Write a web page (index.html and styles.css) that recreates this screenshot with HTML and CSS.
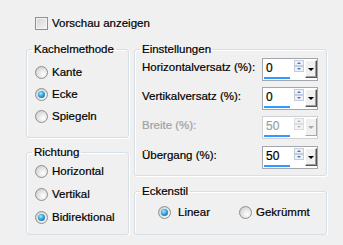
FILE: index.html
```html
<!DOCTYPE html>
<html lang="de">
<head>
    <meta charset="UTF-8">
    <title>Kacheln</title>
    <link rel="stylesheet" href="styles.css">
</head>
<body>
    <div class="dialog">
        <label class="check-row"><span class="checkbox"></span>Vorschau anzeigen</label>

        <div class="groups">
            <div class="col">
                <fieldset class="group group-method">
                    <legend>Kachelmethode</legend>
                    <div class="options">
                        <label class="option"><span class="radio"></span>Kante</label>
                        <label class="option"><span class="radio checked"></span>Ecke</label>
                        <label class="option"><span class="radio"></span>Spiegeln</label>
                    </div>
                </fieldset>
                <fieldset class="group group-dir">
                    <legend>Richtung</legend>
                    <div class="options options-dir">
                        <label class="option"><span class="radio"></span>Horizontal</label>
                        <label class="option"><span class="radio"></span>Vertikal</label>
                        <label class="option"><span class="radio checked"></span>Bidirektional</label>
                    </div>
                </fieldset>
            </div>

            <div class="col">
                <fieldset class="group group-settings">
                    <legend>Einstellungen</legend>
                    <div class="fields">
                        <div class="field">
                            <span class="field-label">Horizontalversatz (%):</span>
                            <div class="spin">
                                <div class="spin-value"><span>0</span><span class="spin-bar"></span></div>
                                <div class="spin-arrows"><span class="arr up"></span><span class="arr down"></span></div>
                                <div class="spin-drop"></div>
                            </div>
                        </div>
                        <div class="field">
                            <span class="field-label">Vertikalversatz (%):</span>
                            <div class="spin">
                                <div class="spin-value"><span>0</span><span class="spin-bar"></span></div>
                                <div class="spin-arrows"><span class="arr up"></span><span class="arr down"></span></div>
                                <div class="spin-drop"></div>
                            </div>
                        </div>
                        <div class="field disabled">
                            <span class="field-label">Breite (%):</span>
                            <div class="spin">
                                <div class="spin-value"><span>50</span><span class="spin-bar"></span></div>
                                <div class="spin-arrows"><span class="arr up"></span><span class="arr down"></span></div>
                                <div class="spin-drop"></div>
                            </div>
                        </div>
                        <div class="field">
                            <span class="field-label">Übergang (%):</span>
                            <div class="spin">
                                <div class="spin-value"><span>50</span><span class="spin-bar"></span></div>
                                <div class="spin-arrows"><span class="arr up"></span><span class="arr down"></span></div>
                                <div class="spin-drop"></div>
                            </div>
                        </div>
                    </div>
                </fieldset>
                <fieldset class="group group-corner">
                    <legend>Eckenstil</legend>
                    <div class="options-row">
                        <label class="option option-linear"><span class="radio checked"></span>Linear</label>
                        <label class="option"><span class="radio"></span>Gekrümmt</label>
                    </div>
                </fieldset>
            </div>
        </div>
    </div>
</body>
</html>
```

FILE: styles.css
```css
body {
    margin: 0;
    background-color: #f0f0f0;
    font-family: 'Liberation Sans', Arial, sans-serif;
    font-size: 11.5px;
    color: #000;
    -webkit-text-stroke: 0.2px currentColor; /* heavier, like ClearType */
}
.dialog {
    padding: 17px 0 0 26px;
    width: 301px;
}

/* checkbox row on top */
.check-row {
    display: flex;
    align-items: center;
    gap: 4px;
    height: 13px;
    margin-left: 9px;
    line-height: 13px;
}
.checkbox {
    width: 13px;
    height: 13px;
    box-sizing: border-box;
    border: 1px solid #8e8f8f;
    background: linear-gradient(135deg, #d4d4d4, #f4f4f4);
    box-shadow: inset 0 0 0 1px #f4f4f4;
}

.groups {
    display: grid;
    grid-template-columns: 103px 193px;
    gap: 5px;
    margin-top: 12px;
}
.col {
    display: flex;
    flex-direction: column;
}

/* group boxes */
.group {
    margin: 0;
    padding: 0;
    min-width: 0;
    box-sizing: border-box;
    border: 1px solid #d5dfe5;
    border-radius: 3px;
    box-shadow: inset 1px 1px 0 #fff, 1px 1px 0 #fff;
}
.group legend {
    margin-left: 5px;
    padding: 0 2px;
    line-height: 14px;
}
.group-method { height: 96px; }
.group-dir { height: 90px; margin-top: 7px; }
.group-settings { height: 134px; }
.group-corner { height: 51px; margin-top: 8px; }

/* radio options */
.options {
    display: flex;
    flex-direction: column;
    gap: 7px;
    padding: 9px 0 0 8px;
}
.options-dir {
    gap: 8px;
    padding-top: 5px;
}
.options-row {
    display: flex;
    padding: 7px 0 0 23px;
}
.option {
    display: flex;
    align-items: center;
    gap: 4px;
    height: 15px;
    line-height: 15px;
}
.option-linear {
    width: 81px;
}
.option-linear .radio {
    margin-right: 3px;
}
.radio {
    position: relative;
    flex: none;
    width: 13px;
    height: 13px;
    box-sizing: border-box;
    border-radius: 50%;
    border: 1px solid #8f8f8f;
    background: radial-gradient(circle at 65% 65%, #ffffff 0%, #e6e6e6 45%, #c4c4c4 100%);
}
.radio.checked::after {
    content: "";
    position: absolute;
    left: 2px;
    top: 2px;
    width: 7px;
    height: 7px;
    border-radius: 50%;
    background: radial-gradient(circle at 40% 35%, #a8ecff 0%, #2fa4dc 45%, #0d5b8e 100%);
}

/* settings fields */
.fields {
    display: flex;
    flex-direction: column;
    gap: 6px;
    padding: 2px 8px 0 7px;
}
.field {
    display: flex;
    justify-content: space-between;
    align-items: flex-start;
    height: 23px;
}
.field-label {
    padding-top: 2px;
    line-height: 14px;
}
.field:nth-child(4) {
    margin-top: 1px;
}
.spin {
    display: flex;
    align-items: flex-start;
    width: 56px;
    height: 23px;
    box-sizing: border-box;
    border: 1px solid #a3a6ad;
    background-color: #fff;
}
.spin-value {
    display: flex;
    flex-direction: column;
    width: 31px;
    padding: 2px 0 0 3px;
    box-sizing: border-box;
    line-height: 14px;
    font-size: 12px;
}
.spin-bar {
    width: 26px;
    height: 2px;
    margin: 2px 0 0 -2px;
    background-color: #3399ff;
}
.spin-arrows {
    display: flex;
    flex-direction: column;
    width: 10px;
    margin-top: 1px;
}
.arr {
    position: relative;
    height: 6px;
    box-sizing: border-box;
    border: 1px solid #c5cdd8;
    background-color: #eef2f8;
}
.arr::after {
    content: "";
    position: absolute;
    left: 2px;
    border-left: 2px solid transparent;
    border-right: 2px solid transparent;
}
.arr.up::after {
    top: 1px;
    border-bottom: 2px solid #4a78c8;
}
.arr.down::after {
    top: 1px;
    border-top: 2px solid #4a78c8;
}
.spin-drop {
    position: relative;
    width: 12px;
    height: 18px;
    margin: 1px 0 0 1px;
    box-sizing: border-box;
    background-color: #f0f0f0;
    border-top: 1px solid #fff;
    border-left: 1px solid #fff;
    border-right: 1px solid #555;
    border-bottom: 1px solid #555;
    box-shadow: inset -1px -1px 0 #a0a0a0;
}
.spin-drop::after {
    content: "";
    position: absolute;
    left: 2px;
    top: 7px;
    border-left: 3px solid transparent;
    border-right: 3px solid transparent;
    border-top: 3px solid #000;
}

/* disabled field */
.disabled .field-label,
.disabled .spin-value {
    color: #a0a0a0;
}
.disabled .spin {
    border-color: #cfd1d5;
}
.disabled .arr {
    border-color: #dadde2;
    background-color: #f4f4f4;
}
.disabled .arr.up::after { border-bottom-color: #b8b8b8; }
.disabled .arr.down::after { border-top-color: #b8b8b8; }
.disabled .spin-drop {
    border-right-color: #a8a8a8;
    border-bottom-color: #a8a8a8;
    box-shadow: none;
}
.disabled .spin-drop::after {
    border-top-color: #a8a8a8;
}
```
